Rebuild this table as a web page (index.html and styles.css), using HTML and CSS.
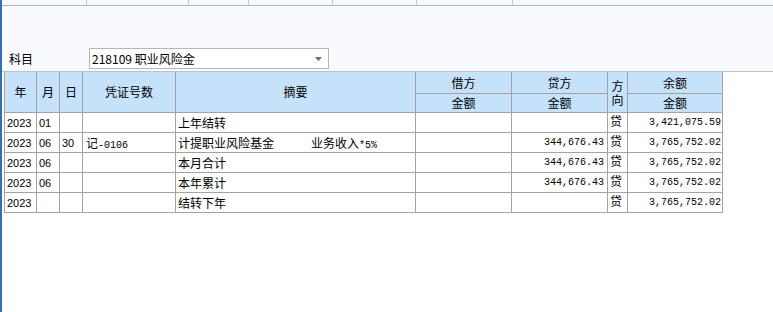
FILE: index.html
```html
<!DOCTYPE html>
<html lang="zh-CN">
<head>
<meta charset="utf-8">
<title>明细账</title>
<link rel="stylesheet" href="styles.css">
</head>
<body>
<div class="window">
  <div class="col-strip">
    <span class="strip-cell w85"></span>
    <span class="strip-cell w102"></span>
    <span class="strip-cell w60"></span>
    <span class="strip-cell w84"></span>
    <span class="strip-cell w84"></span>
    <span class="strip-cell w96"></span>
    <span class="strip-cell rest"></span>
  </div>
  <div class="filter-area">
    <div class="filter-row">
      <label class="filter-label">科目</label>
      <div class="combo">
        <span class="combo-text">218109 职业风险金</span>
        <svg class="combo-arrow" width="7" height="4" viewBox="0 0 7 4"><polygon points="0,0 7,0 3.5,4" fill="#6e6e6e"/></svg>
      </div>
    </div>
  </div>
  <div class="ledger-area">
    <div class="ledger">
      <div class="hd span2 c-year">年</div>
      <div class="hd span2 c-mon">月</div>
      <div class="hd span2 c-day">日</div>
      <div class="hd span2 c-voucher">凭证号数</div>
      <div class="hd span2 c-memo">摘要</div>
      <div class="hd c-debit">借方</div>
      <div class="hd c-credit">贷方</div>
      <div class="hd span2 c-dir vertical">方向</div>
      <div class="hd c-bal">余额</div>
      <div class="hd c-debit">金额</div>
      <div class="hd c-credit">金额</div>
      <div class="hd c-bal">金额</div>

      <div class="cell num">2023</div><div class="cell num">01</div><div class="cell num"></div><div class="cell"></div>
      <div class="cell cjk">上年结转</div><div class="cell amt"></div><div class="cell amt"></div>
      <div class="cell dir">贷</div><div class="cell bal">3,421,075.59</div>

      <div class="cell num">2023</div><div class="cell num">06</div><div class="cell num">30</div><div class="cell cjk voucher">记<span class="mono">-0106</span></div>
      <div class="cell cjk">计提职业风险基金<span class="memo-note">业务收入<span class="mono">*5%</span></span></div><div class="cell amt"></div><div class="cell amt">344,676.43</div>
      <div class="cell dir">贷</div><div class="cell bal">3,765,752.02</div>

      <div class="cell num">2023</div><div class="cell num">06</div><div class="cell num"></div><div class="cell"></div>
      <div class="cell cjk">本月合计</div><div class="cell amt"></div><div class="cell amt">344,676.43</div>
      <div class="cell dir">贷</div><div class="cell bal">3,765,752.02</div>

      <div class="cell num">2023</div><div class="cell num">06</div><div class="cell num"></div><div class="cell"></div>
      <div class="cell cjk">本年累计</div><div class="cell amt"></div><div class="cell amt">344,676.43</div>
      <div class="cell dir">贷</div><div class="cell bal">3,765,752.02</div>

      <div class="cell num">2023</div><div class="cell num"></div><div class="cell num"></div><div class="cell"></div>
      <div class="cell cjk">结转下年</div><div class="cell amt"></div><div class="cell amt"></div>
      <div class="cell dir">贷</div><div class="cell bal">3,765,752.02</div>
    </div>
  </div>
</div>
</body>
</html>
```
FILE: styles.css
```css
* { box-sizing: border-box; }
html, body { margin: 0; padding: 0; background: #ffffff; }
body {
  font-family: "Noto Sans CJK SC", "Liberation Sans", sans-serif;
  font-size: 12px;
  color: #000;
}
.window {
  width: 773px;
  height: 312px;
  border-left: 2px solid #3a6cb4;
  display: flex;
  flex-direction: column;
  overflow: hidden;
}
.col-strip {
  display: flex;
  height: 6px;
  background: #f6f8fc;
  border-bottom: 1px solid #a9b9cd;
}
.strip-cell { border-right: 1px solid #c9c9c9; height: 5px; }
.strip-cell.w85 { width: 85px; }
.strip-cell.w102 { width: 102px; }
.strip-cell.w60 { width: 60px; }
.strip-cell.w84 { width: 84px; }
.strip-cell.w96 { width: 96px; }
.strip-cell.rest { flex: 1; border-right: none; }

.filter-area {
  height: 66px;
  background: #f9fafd;
  border-bottom: 1px solid #c2c2c2;
  padding: 42px 0 0 7px;
}
.filter-row { display: flex; align-items: center; }
.filter-label { width: 80px; line-height: 21px; }
.combo {
  width: 240px;
  height: 21px;
  border: 1px solid #b7b7b7;
  background: #fff;
  display: flex;
  align-items: center;
  padding: 0 6px 0 2px;
}
.combo-text { flex: 1; line-height: 19px; }
.combo-arrow { display: block; }

.ledger-area { flex: 1; background: #fff; padding-left: 2px; }
.ledger {
  display: grid;
  width: 719px;
  grid-template-columns: 31px 22px 22px 92px 239px 95px 95px 19px 94px;
  grid-template-rows: 21px 18px repeat(5, 19px);
  gap: 1px;
  padding: 0 1px 1px 1px;
  background: #a3a3a3;
}
.hd {
  background: #c6e2fb;
  display: flex;
  align-items: center;
  justify-content: center;
  line-height: 14px;
}
.span2 { grid-row: span 2; }
.vertical {
  writing-mode: vertical-rl;
  text-orientation: upright;
  letter-spacing: 2px;
  line-height: 19px;
  padding-top: 4px;
}
.cell {
  background: #fff;
  line-height: 19px;
  white-space: nowrap;
  overflow: hidden;
}
.num { font-family: "Liberation Sans", sans-serif; font-size: 11px; padding-left: 2px; padding-top: 1px; }
.cjk { padding-left: 2px; }
.voucher { padding-left: 3px; }
.mono { font-family: "Liberation Mono", monospace; font-size: 10px; }
.memo-note { margin-left: 37px; }
.amt { font-family: "Liberation Mono", monospace; font-size: 10px; text-align: right; padding-right: 3px; }
.bal { font-family: "Liberation Mono", monospace; font-size: 10px; text-align: right; padding-right: 1px; }
.dir { padding-left: 2px; line-height: 16px; }
```
